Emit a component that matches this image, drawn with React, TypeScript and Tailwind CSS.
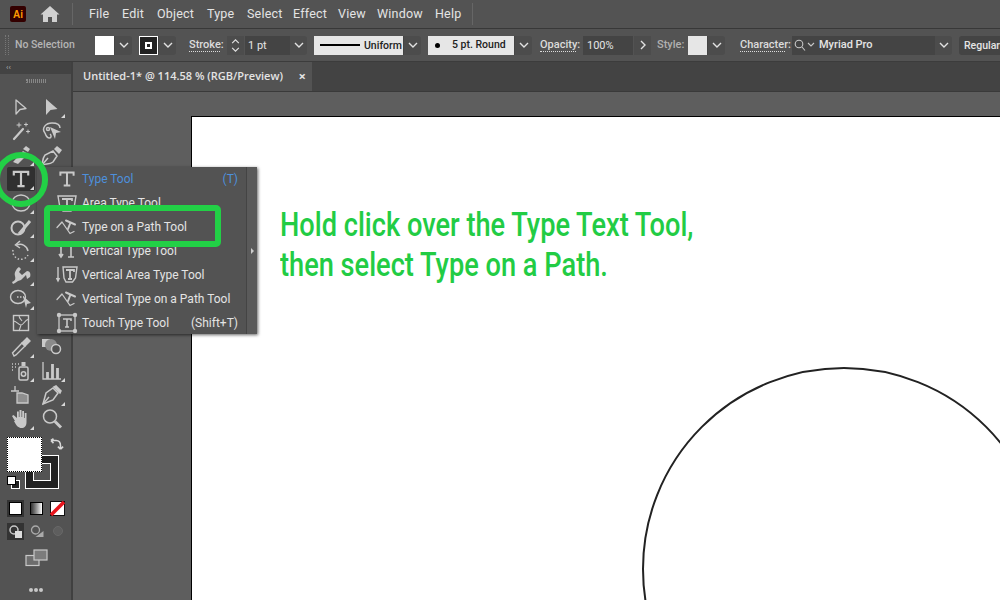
import React from "react";

const G = "#c9c9c9";

function Chev({ dark = false }: { dark?: boolean }) {
  return (
    <svg width="10" height="6" viewBox="0 0 10 6" fill="none" stroke={dark ? "#222" : "#e2e2e2"} strokeWidth="1.4">
      <path d="M1 1l4 4 4-4" />
    </svg>
  );
}

function ChevBox({ w = "w-[18px]" }: { w?: string }) {
  return (
    <div className={`${w} h-[19px] flex items-center justify-center bg-[#4c4c4c] border-l border-[#444] rounded-r-[3px]`}>
      <Chev />
    </div>
  );
}

function Corner() {
  return <span className="absolute right-[1px] bottom-[1px] w-0 h-0 border-l-[4px] border-l-transparent border-b-[4px] border-b-[#d8d8d8]" />;
}

function Tool({ children, corner = true, active = false }: { children?: React.ReactNode; corner?: boolean; active?: boolean }) {
  return (
    <div className={`relative w-[28px] h-[24px] flex items-center justify-center mx-auto ${active ? "bg-[#303030] rounded-[2px]" : ""}`}>
      {children}
      {corner && children ? <Corner /> : null}
    </div>
  );
}

const Ic = ({ children, s = 22 }: { children: React.ReactNode; s?: number }) => (
  <svg width={s} height={s} viewBox="0 0 22 22" fill="none" stroke={G} strokeWidth="1.3" strokeLinejoin="round" strokeLinecap="round">
    {children}
  </svg>
);

const TypeIcon = ({ s = 22 }: { s?: number }) => (
  <svg width={s} height={s} viewBox="0 0 20 20" fill="none" stroke={G} strokeWidth="1.800">
    <path d="M4 7V4h12v3M10 4v12M7 16h6" />
  </svg>
);

const PathIcon = () => (
  <Ic>
    <path d="M1 11.500L6 6l8 11.500 4-2" />
    <path d="M10 4.500l9 4M14.500 6.500L12 13" strokeWidth="2" />
  </Ic>
);

const AreaIcon = () => (
  <svg width="24" height="20" viewBox="0 0 24 20" fill="none" stroke={G} strokeWidth="1.4">
    <path d="M3 3h18l-2 12-3 3H8l-3-3z" />
    <path d="M7 6h10v2M12 6v9M10 15h4" strokeWidth="1.8" />
  </svg>
);

const VTypeIcon = () => (
  <svg width="22" height="20" viewBox="0 0 22 20" fill="none" stroke={G} strokeWidth="1.6">
    <path d="M5 3v13M3 13l2 3 2-3M12 3h6M15 3v13M12 16h6" />
  </svg>
);

const VAreaIcon = () => (
  <svg width="24" height="20" viewBox="0 0 24 20" fill="none" stroke={G} strokeWidth="1.4">
    <path d="M3 2v14M1.500 13l1.500 3 1.500-3M8 2h14l-1.500 11-3 4H11l-2-4z" />
    <path d="M11 5h8v2M15 5v9M13 14h4" strokeWidth="1.8" />
  </svg>
);

const TouchIcon = () => (
  <svg width="22" height="22" viewBox="0 0 22 22" fill="none" stroke={G} strokeWidth="1.3">
    <rect x="3" y="3" width="16" height="16" />
    <path d="M7 7h8v2M11 7v8M9 15h4" strokeWidth="1.6" />
    <g fill={G} stroke="none">
      <circle cx="3" cy="3" r="2.200" /><circle cx="19" cy="3" r="2.200" /><circle cx="3" cy="19" r="2.200" /><circle cx="19" cy="19" r="2.200" />
    </g>
  </svg>
);

const menus: [string, string][] = [
  ["File", "w-[33px]"], ["Edit", "w-[35px]"], ["Object", "w-[50px]"], ["Type", "w-[40px]"], ["Select", "w-[46px]"],
  ["Effect", "w-[45px]"], ["View", "w-[39px]"], ["Window", "w-[58px]"], ["Help", "w-[26px]"],
];

const flyout: { icon: React.ReactNode; label: string; key?: string; blue?: boolean }[] = [
  { icon: <TypeIcon />, label: "Type Tool", key: "(T)", blue: true },
  { icon: <AreaIcon />, label: "Area Type Tool" },
  { icon: <PathIcon />, label: "Type on a Path Tool" },
  { icon: <VTypeIcon />, label: "Vertical Type Tool" },
  { icon: <VAreaIcon />, label: "Vertical Area Type Tool" },
  { icon: <PathIcon />, label: "Vertical Type on a Path Tool" },
  { icon: <TouchIcon />, label: "Touch Type Tool", key: "(Shift+T)" },
];

const Dotted = ({ children, className = "" }: { children: React.ReactNode; className?: string }) => (
  <span className={`text-[11px] leading-[13px] font-medium whitespace-nowrap text-[#dcdcdc] border-b border-dotted border-[#dcdcdc] ${className}`}>{children}</span>
);

function ToolGrid() {
  return (
    <div className="grid grid-cols-[31px_31px] ml-[5px] mt-[12px]">
      <Tool corner={false}><Ic><path d="M6 4v14l4-4.500 6-1z" /></Ic></Tool>
      <Tool><svg width="22" height="22" viewBox="0 0 22 22"><path d="M5 3v16l4.500-5 7-1z" fill={G} /></svg></Tool>
      <Tool corner={false}><Ic><path d="M4 19L13 9" strokeWidth="2.200" /><path d="M9 3v4M7 5h4M16 3v3M14.500 4.500h3M18 10v3M16.500 11.500h3" strokeWidth="1" /></Ic></Tool>
      <Tool corner={false}><svg width="24" height="22" viewBox="0 0 24 22" fill="none" stroke={G} strokeWidth="1.500"><path d="M5 13C1 8 6 3 12 3c5 0 8 2 8 5M5 13c1 3 3 5 4.500 5 2 0 2-3 .5-4" /><circle cx="8" cy="9" r="1.500" /><path d="M10 7l11 5-5 1-1 6z" fill={G} stroke="none" /></svg></Tool>
      <Tool><svg width="22" height="22" viewBox="0 0 22 22"><path d="M3 18l10-11 5 3-10 10z" fill={G} /><path d="M13 5l3-3 4 3-2 3z" fill={G} /></svg></Tool>
      <Tool corner={false}><svg width="24" height="22" viewBox="0 0 24 22" fill="none" stroke={G} strokeWidth="1.500"><path d="M2 21c1-3 0-6 3-10l8-4 4 5-4 6c-4 3-7 1-11 3z" /><path d="M2 21l6-7" /><path d="M14 5l3-3 5 4-3 4z" fill={G} stroke="none" /></svg></Tool>
      <Tool active><TypeIcon s={24} /></Tool>
      <Tool />
      <Tool><svg width="22" height="22" viewBox="0 0 22 22" fill="none" stroke={G} strokeWidth="1.400"><ellipse cx="11" cy="11" rx="9" ry="8" /></svg></Tool>
      <Tool />
      <Tool><svg width="24" height="22" viewBox="0 0 24 22" fill="none" stroke={G}><circle cx="9" cy="12" r="6.500" strokeWidth="2" /><path d="M10 18L21 5" strokeWidth="3" /></svg></Tool>
      <Tool />
      <Tool><svg width="22" height="22" viewBox="0 0 22 22" fill="none" stroke={G} strokeWidth="1.500"><path d="M7 5a8 8 0 0 1 11 6" /><path d="M10 1L5.500 5l4.500 3" /><path d="M3 10a8 8 0 0 0 15 5" strokeDasharray="1.500 2" /></svg></Tool>
      <Tool />
      <Tool><svg width="24" height="22" viewBox="0 0 24 22" fill={G}><path d="M3 18c3-1 4-3 3-6-1-3 1-7 4-9l2 2-2 3 3 3 5-4c3 0 4 3 3 6l-3 2-1-4-5 5-3 1-3 2-2 1z" /></svg></Tool>
      <Tool />
      <Tool><svg width="24" height="22" viewBox="0 0 24 22" fill="none" stroke={G} strokeWidth="1.400"><ellipse cx="9" cy="9" rx="7.500" ry="6.500" /><path d="M8 9h7" strokeDasharray="1.500 1.500" /><path d="M14 8l8 7-4 1-1 4z" fill={G} stroke="none" /></svg></Tool>
      <Tool />
      <Tool corner={false}><svg width="18" height="18" viewBox="0 0 18 18" fill="none" stroke={G} strokeWidth="1.400"><rect x="1.500" y="1.500" width="15" height="15" /><path d="M1 7c4 0 5 4 8 4s3-5 8-6M9 11l-2 6M7 1c0 4 2 4 3 6" strokeWidth="1.100" /></svg></Tool>
      <Tool />
      <Tool><svg width="22" height="22" viewBox="0 0 22 22" fill="none" stroke={G} strokeWidth="1.400"><path d="M4 20l-1.500-3L12 7l3 3-9 9z" /><path d="M12 7l5-5 3 3-5 5z" fill={G} /></svg></Tool>
      <Tool corner={false}><svg width="22" height="22" viewBox="0 0 22 22" fill="none" stroke={G} strokeWidth="1.500"><rect x="1" y="3" width="8" height="8" fill={G} stroke="none" /><circle cx="10" cy="9" r="6" fill="#8a8a8a" stroke="none" /><circle cx="15" cy="13" r="4.500" fill="#505050" /></svg></Tool>
      <Tool><svg width="22" height="22" viewBox="0 0 22 22" fill="none" stroke={G} strokeWidth="1.500"><rect x="9" y="7" width="9" height="13" rx="1.500" /><circle cx="13.500" cy="14" r="2.200" /><rect x="11.500" y="2" width="4" height="4" fill={G} stroke="none" /><path d="M2 4h1M5 4h1M8 4h1M2 7h1M5 7h1M2 10h1" strokeWidth="1.500" /></svg></Tool>
      <Tool><svg width="22" height="22" viewBox="0 0 22 22" fill="none" stroke={G}><path d="M2 2v17h18" strokeWidth="1.300" /><path d="M6.500 19v-7M11.500 19V4M16.500 19V8" strokeWidth="2.800" /></svg></Tool>
      <Tool corner={false}><svg width="22" height="22" viewBox="0 0 22 22" fill="none" stroke={G} strokeWidth="1.300"><path d="M1 7h8M5 2v5" /><path d="M7 9h5l6 2v8H7z" fill="#8f8f8f" /></svg></Tool>
      <Tool><svg width="22" height="22" viewBox="0 0 22 22" fill="none" stroke={G} strokeWidth="1.500"><path d="M2 20l3-11 7-5 5 5-5 7z" /><path d="M13 3l2-1 5 5-1 2z" fill={G} /><path d="M2 20l6-7" /></svg></Tool>
      <Tool><svg width="22" height="22" viewBox="0 0 22 22" fill={G}><path d="M5 13L2 8l1.500-1L7 10V3.500h1.800V9h.7V2h2v7h.7V3h1.800v7h.7V5h1.800v9c0 4-2 6-5 6s-5-2-7.500-7z" /></svg></Tool>
      <Tool corner={false}><svg width="22" height="22" viewBox="0 0 22 22" fill="none" stroke={G}><circle cx="9" cy="8.500" r="6.500" strokeWidth="1.500" /><path d="M14 13.500l6 6" strokeWidth="3" /></svg></Tool>
    </div>
  );
}

function ColorArea() {
  return (
    <div className="ml-[7px] mt-[6px]">
      <div className="relative w-[60px] h-[53px]">
        <div className="absolute left-[18px] top-[18px] w-[34px] h-[34px] bg-[#222] border border-white flex items-center justify-center">
          <div className="w-[18px] h-[18px] bg-[#535353] border border-white" />
        </div>
        <div className="absolute left-0 top-0 w-[35px] h-[35px] bg-white border border-dotted border-black" />
        <svg className="absolute left-[43px] top-0" width="14" height="14" viewBox="0 0 16 14" fill="none" stroke="#d8d8d8" strokeWidth="1.800"><path d="M1 3h6c3 0 5 2 5 6v3M1 3l3-2M1 3l3 3M12 13l-3-3M12 13l3-3" /></svg>
        <div className="absolute left-0 top-[39px] w-[18px] h-[16px]">
          <div className="absolute left-[4px] top-[4px] w-[9px] h-[9px] bg-[#222] border border-white" />
          <div className="absolute left-0 top-0 w-[9px] h-[9px] bg-white border border-black" />
        </div>
      </div>
      <div className="flex gap-[5px] mt-[10px] items-center">
        <div className="w-[17px] h-[17px] bg-[#333] flex items-center justify-center"><div className="w-[13px] h-[13px] bg-white border border-black" /></div>
        <div className="w-[13px] h-[13px] border border-black bg-gradient-to-r from-[#333] to-white mx-[1px]" />
        <svg width="15" height="15" viewBox="0 0 15 15" className="ml-[1px]"><rect width="15" height="15" fill="#111" /><rect x="1" y="1" width="13" height="13" fill="#fff" /><path d="M1 14L14 1" stroke="#e8141c" strokeWidth="3.500" /></svg>
      </div>
      <div className="flex gap-[5px] mt-[6px] items-center">
        <div className="w-[17px] h-[17px] bg-[#333] flex items-center justify-center">
          <svg width="13" height="13" viewBox="0 0 13 13"><circle cx="5" cy="5" r="4" fill="none" stroke={G} strokeWidth="1.500" /><rect x="6" y="6" width="7" height="7" fill="#ddd" /></svg>
        </div>
        <svg width="14" height="13" viewBox="0 0 13 13" className="ml-[1px]"><circle cx="5" cy="5" r="4" fill="none" stroke="#aaa" strokeWidth="1.300" /><path d="M5 12h8V6z" fill="#aaa" /></svg>
        <svg width="13" height="13" viewBox="0 0 13 13" className="ml-[3px]"><circle cx="6" cy="6" r="4.500" fill="#5e5e5e" stroke="#686868" /></svg>
      </div>
      <svg width="24" height="18" viewBox="0 0 24 18" fill="none" stroke="#c8c8c8" strokeWidth="1.200" className="ml-[18px] mt-[9px]">
        <rect x="1" y="6.500" width="13" height="10" fill="#6d6d6d" />
        <rect x="9" y="1" width="13" height="10" fill="#7c7c7c" />
      </svg>
      <div className="flex gap-[1px] ml-[22px] mt-[21px]">
        <span className="w-[4px] h-[4px] rounded-full bg-[#c8c8c8]" />
        <span className="w-[4px] h-[4px] rounded-full bg-[#c8c8c8]" />
        <span className="w-[4px] h-[4px] rounded-full bg-[#c8c8c8]" />
      </div>
    </div>
  );
}

export default function App() {
  return (
    <div className="relative w-[1000px] h-[600px] overflow-hidden flex flex-col bg-[#535353] text-[#e4e4e4] font-['Roboto',sans-serif]">
      {/* menu bar */}
      <div className="h-[29px] shrink-0 flex items-center border-b border-[#383838]">
        <div className="ml-[10px] w-[16px] h-[16px] rounded-[2px] bg-[#330000] flex items-center justify-center text-[10px] font-bold text-[#ff9a00] font-['Liberation_Sans',sans-serif]">Ai</div>
        <svg className="ml-[14px]" width="20" height="18" viewBox="0 0 20 18" fill="#d0d0d0"><path d="M10 1L0.500 9.500H3V17h5v-5h4v5h5V9.500h2.500z" /></svg>
        <div className="ml-[12px] w-px h-[22px] bg-[#666]" />
        <div className="ml-[16px] flex text-[12.500px] leading-none tracking-[0.2px]">
          {menus.map(([m, w]) => <span key={m} className={w}>{m}</span>)}
        </div>
        <div className="ml-[11px] w-px h-[22px] bg-[#666]" />
      </div>
      {/* control bar */}
      <div className="h-[33px] shrink-0 flex items-center border-b border-[#3c3c3c] [&>*]:shrink-0">
        <div className="ml-[5px] w-[4px] h-[20px] border-x border-dotted border-[#777]" />
        <span className="ml-[6px] w-[80px] text-[10.500px] leading-none font-medium text-[#b5b5b5]">No Selection</span>
        <div className="w-[19px] h-[19px] bg-white" />
        <ChevBox />
        <div className="ml-[7px] w-[19px] h-[19px] bg-[#222] border border-white flex items-center justify-center"><div className="w-[7px] h-[7px] border-2 border-white" /></div>
        <ChevBox />
        <Dotted className="ml-[13px] w-[31px]">Stroke:</Dotted>
        <div className="ml-[7px] w-[17px] h-[19px] flex flex-col items-center justify-center gap-[3px] bg-[#4c4c4c]">
          <svg width="9" height="5" viewBox="0 0 10 6" fill="none" stroke="#e2e2e2" strokeWidth="1.400"><path d="M1 5l4-4 4 4" /></svg>
          <svg width="9" height="5" viewBox="0 0 10 6" fill="none" stroke="#e2e2e2" strokeWidth="1.400"><path d="M1 1l4 4 4-4" /></svg>
        </div>
        <div className="ml-px w-[44px] h-[19px] bg-[#444] text-[11px] leading-[19px] pl-[3px]">1 pt</div>
        <ChevBox />
        <div className="ml-[7px] w-[89px] h-[19px] bg-[#e6e6e6] flex items-center pl-[6px] text-[10.500px] font-medium text-[#222]">
          <div className="w-[40px] h-[2px] bg-black mr-[4px]" /><span className="pt-[2px]">Uniform</span>
        </div>
        <ChevBox />
        <div className="ml-[7px] w-[86px] h-[19px] bg-[#e6e6e6] flex items-center pl-[7px] text-[10.500px] font-medium text-[#222]">
          <span className="w-[5px] h-[5px] rounded-full bg-black mr-[12px]" />5 pt. Round
        </div>
        <ChevBox />
        <Dotted className="ml-[8px] w-[36px]">Opacity:</Dotted>
        <div className="ml-[7px] w-[50px] h-[19px] bg-[#444] text-[11px] leading-[19px] pl-[4px]">100%</div>
        <div className="ml-px w-[17px] h-[19px] bg-[#4c4c4c] flex items-center justify-center">
          <svg width="6" height="10" viewBox="0 0 6 10" fill="none" stroke="#e2e2e2" strokeWidth="1.400"><path d="M1 1l4 4-4 4" /></svg>
        </div>
        <span className="ml-[6px] w-[25px] text-[11px] font-medium text-[#b0b0b0]">Style:</span>
        <div className="ml-[6px] w-[19px] h-[19px] bg-[#e6e6e6]" />
        <ChevBox />
        <Dotted className="ml-[15px] w-[45px]">Character:</Dotted>
        <div className="ml-[7px] w-[142px] h-[19px] bg-[#444] flex items-center pl-[2px] text-[11px] font-medium">
          <svg width="22" height="12" viewBox="0 0 22 12" fill="none" stroke="#c8c8c8" strokeWidth="1.100"><circle cx="5" cy="5" r="3.800" /><path d="M8 8l3 3.500M14 4l3 3 3-3" /></svg>
          <span className="ml-[3px]">Myriad Pro</span>
        </div>
        <ChevBox />
        <div className="ml-[7px] w-[41px] h-[19px] bg-[#444] rounded-l-[3px] pl-[5px] text-[10.500px] leading-[19px] font-medium whitespace-nowrap">Regular</div>
      </div>
      {/* body */}
      <div className="flex-1 min-h-0 flex">
        <div className="w-[73px] shrink-0 flex flex-col border-r-2 border-[#404040]">
          <div className="h-[12px] bg-[#434343] text-[8px] leading-[11px] pl-[6px] text-[#b0b0b0]">‹‹</div>
          <div className="mt-[5px] mx-auto w-[20px] h-[4px] border-x border-dotted border-[#888] bg-[repeating-linear-gradient(90deg,#888_0_1px,transparent_1px_2px)]" />
          <ToolGrid />
          <ColorArea />
        </div>
        <div className="flex-1 min-w-0 flex flex-col">
          <div className="h-[30px] shrink-0 flex bg-[#434343] border-b border-[#3a3a3a]">
            <div className="w-[239px] bg-[#535353] flex items-center pl-[10px] pr-[6px] justify-between text-[11px] font-semibold font-['Open_Sans',sans-serif]">
              <span>Untitled-1* @ 114.58 % (RGB/Preview)</span>
              <span className="text-[13px] leading-none font-bold">×</span>
            </div>
          </div>
          <div className="flex-1 min-h-0 bg-[#5e5e5e] pl-[118px] pt-[24px]">
            <div className="relative h-full bg-white border-l border-t border-black pl-[88px] pt-[88px] overflow-hidden">
              <p className="text-[33px] leading-[40px] font-medium text-[#22cc44] whitespace-nowrap origin-left scale-x-[0.824] font-['Roboto',sans-serif]">
                Hold click over the Type Text Tool,<br />then select Type on a Path.
              </p>
              <svg className="absolute left-[450px] top-[250px]" width="420" height="420" viewBox="0 0 420 420" fill="none" stroke="#222" strokeWidth="2">
                <circle cx="202" cy="202" r="201" />
              </svg>
            </div>
          </div>
        </div>
      </div>
      {/* flyout */}
      <div className="absolute left-[37px] top-[167px] w-[220px] h-[167px] bg-[#535353] shadow-[1px_1px_3px_rgba(0,0,0,0.6)] flex">
        <div className="w-[210px] flex flex-col border-r border-[#444]">
          {flyout.map((f) => (
            <div key={f.label} className="h-[24px] shrink-0 flex items-center text-[12px] leading-none">
              <div className="w-[45px] flex justify-end pr-[2px]"><div className="w-[26px] flex justify-center">{f.icon}</div></div>
              <span className={f.blue ? "text-[#4d90dc]" : ""}>{f.label}</span>
              {f.key ? <span className={`ml-auto mr-[8px] ${f.blue ? "text-[#4d90dc]" : ""}`}>{f.key}</span> : null}
            </div>
          ))}
        </div>
        <div className="flex-1 flex items-center justify-center bg-[#5a5a5a]">
          <span className="w-0 h-0 border-y-[3px] border-y-transparent border-l-[3px] border-l-[#ccc]" />
        </div>
      </div>
      {/* green annotations */}
      <div className="absolute left-[44px] top-[205px] w-[177px] h-[42px] border-[6px] border-[#22d046] rounded-[5px]" />
      <div className="absolute left-[-6px] top-[152px] w-[54px] h-[55px] border-[6px] border-[#22d046] rounded-full" />
    </div>
  );
}
